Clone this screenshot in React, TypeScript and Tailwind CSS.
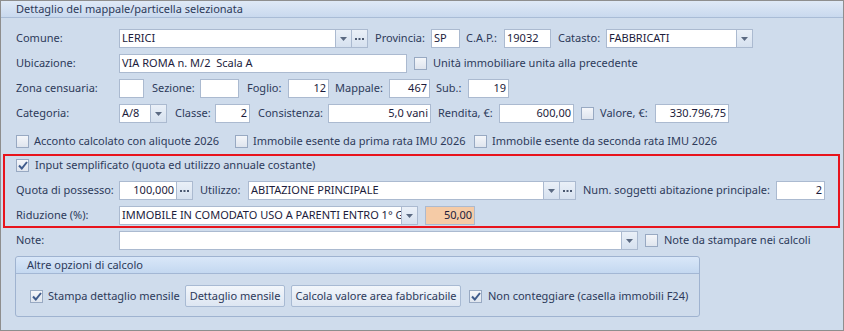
import React from "react";

const font = { fontFamily: '"Noto Sans", "Open Sans", sans-serif' };

const Arrow = () => (
  <svg width="7" height="4" viewBox="0 0 7 4">
    <path d="M0 0h7L3.5 4z" fill="#5b6a82" />
  </svg>
);

const Dots = () => (
  <svg width="9" height="2" viewBox="0 0 9 2">
    <rect x="0" y="0" width="2" height="2" fill="#4a5870" />
    <rect x="3.5" y="0" width="2" height="2" fill="#4a5870" />
    <rect x="7" y="0" width="2" height="2" fill="#4a5870" />
  </svg>
);

const Btn: React.FC<{ children: React.ReactNode; w?: string }> = ({ children, w = "w-[16px]" }) => (
  <div className={`${w} h-full shrink-0 flex items-center justify-center border-l border-[#abbad0] bg-gradient-to-b from-[#eaf0f8] to-[#d6e1ef]`}>
    {children}
  </div>
);

interface FieldProps {
  w: string;
  value?: string;
  right?: boolean;
  bg?: string;
  drop?: boolean;
  dots?: boolean;
}

const Field: React.FC<FieldProps> = ({ w, value = "", right, bg = "bg-white", drop, dots }) => (
  <div className={`${w} h-[19px] shrink-0 flex border border-[#abbad0] ${bg}`}>
    <div
      className={`flex-1 min-w-0 flex items-center px-[2px] text-[11px] text-[#1c1c3c] whitespace-pre overflow-hidden ${
        right ? "justify-end" : ""
      }`}
    >
      {value}
    </div>
    {drop && (
      <Btn>
        <Arrow />
      </Btn>
    )}
    {dots && (
      <Btn>
        <Dots />
      </Btn>
    )}
  </div>
);

const Label: React.FC<{ w?: string; children: React.ReactNode; className?: string }> = ({ w, children, className = "" }) => (
  <div className={`${w ?? ""} shrink-0 whitespace-nowrap text-[11px] text-[#2d3a5a] ${className}`}>{children}</div>
);

const Check: React.FC<{ on?: boolean }> = ({ on }) => (
  <div className="w-[13px] h-[13px] shrink-0 border border-[#98a9c2] bg-gradient-to-b from-[#f4f6fa] to-[#dfe5ee] flex items-center justify-center">
    {on && (
      <svg width="10" height="9" viewBox="0 0 10 9">
        <path d="M1 4.5 L3.8 7.5 L9 1" stroke="#3f5b8c" strokeWidth="2" fill="none" />
      </svg>
    )}
  </div>
);

const Button: React.FC<{ w: string; children: React.ReactNode }> = ({ w, children }) => (
  <div className={`${w} h-[22px] shrink-0 flex items-center justify-center rounded-[2px] border border-[#a8bad3] bg-gradient-to-b from-[#f2f6fb] to-[#dde6f2] text-[11px] text-[#2d3a5a] whitespace-nowrap`}>
    {children}
  </div>
);

export default function App() {
  return (
    <div style={font} className="w-[844px] h-[331px] border border-[#8e8e8e] bg-[#cfdcec] flex flex-col overflow-hidden">
      <div className="h-[17px] shrink-0 border-b border-[#a9bcd6] bg-gradient-to-b from-[#dfe9f6] to-[#c9d9ee] flex items-center pl-[15px] text-[11px] text-[#2d3a5a]">
        Dettaglio del mappale/particella selezionata
      </div>

      <div className="flex flex-col pt-[11px]">
        <div className="flex items-center h-[19px] pl-[15px]">
          <Label w="w-[103px]">Comune:</Label>
          <Field w="w-[249px]" value="LERICI" drop dots />
          <Label w="w-[56px]" className="ml-[7px]">Provincia:</Label>
          <Field w="w-[29px]" value="SP" />
          <Label w="w-[38px]" className="ml-[6px]">C.A.P.:</Label>
          <Field w="w-[47px]" value="19032" />
          <Label w="w-[48px]" className="ml-[7px]">Catasto:</Label>
          <Field w="w-[147px]" value="FABBRICATI" drop />
        </div>

        <div className="flex items-center h-[19px] pl-[15px] mt-[6px]">
          <Label w="w-[103px]">Ubicazione:</Label>
          <Field w="w-[288px]" value="VIA ROMA n. M/2  Scala A" />
          <div className="ml-[7px]">
            <Check />
          </div>
          <Label className="ml-[6px]">Unità immobiliare unita alla precedente</Label>
        </div>

        <div className="flex items-center h-[19px] pl-[15px] mt-[6px]">
          <Label w="w-[103px]">Zona censuaria:</Label>
          <Field w="w-[25px]" />
          <Label w="w-[48px]" className="ml-[8px]">Sezione:</Label>
          <Field w="w-[39px]" />
          <Label w="w-[41px]" className="ml-[8px]">Foglio:</Label>
          <Field w="w-[41px]" value="12" right />
          <Label w="w-[54px]" className="ml-[6px]">Mappale:</Label>
          <Field w="w-[41px]" value="467" right />
          <Label w="w-[32px]" className="ml-[6px]">Sub.:</Label>
          <Field w="w-[41px]" value="19" right />
        </div>

        <div className="flex items-center h-[19px] pl-[15px] mt-[6px]">
          <Label w="w-[103px]">Categoria:</Label>
          <Field w="w-[48px]" value="A/8" drop />
          <Label w="w-[40px]" className="ml-[8px]">Classe:</Label>
          <Field w="w-[35px]" value="2" right />
          <Label w="w-[70px]" className="ml-[8px]">Consistenza:</Label>
          <Field w="w-[103px]" value="5,0 vani" right />
          <Label w="w-[61px]" className="ml-[7px]">Rendita, €:</Label>
          <Field w="w-[75px]" value="600,00" right />
          <div className="ml-[7px]">
            <Check />
          </div>
          <Label w="w-[55px]" className="ml-[6px]">Valore, €:</Label>
          <Field w="w-[74px]" value="330.796,75" right />
        </div>

        <div className="flex items-center h-[19px] pl-[15px] mt-[9px]">
          <Check />
          <Label w="w-[201px]" className="ml-[5px]">Acconto calcolato con aliquote 2026</Label>
          <Check />
          <Label w="w-[221px]" className="ml-[5px]">Immobile esente da prima rata IMU 2026</Label>
          <Check />
          <Label className="ml-[5px]">Immobile esente da seconda rata IMU 2026</Label>
        </div>

        <div className="ml-[2px] mt-[3px] w-[837px] border-2 border-[#e8141c] pb-[1px] flex flex-col">
          <div className="flex items-center h-[19px] pl-[11px]">
            <Check on />
            <Label className="ml-[6px]">Input semplificato (quota ed utilizzo annuale costante)</Label>
          </div>
          <div className="flex items-center h-[19px] pl-[11px] mt-[6px]">
            <Label w="w-[103px]">Quota di possesso:</Label>
            <Field w="w-[74px]" value="100,000" right dots />
            <Label w="w-[48px]" className="ml-[7px]">Utilizzo:</Label>
            <Field w="w-[328px]" value="ABITAZIONE PRINCIPALE" drop dots />
            <Label w="w-[193px]" className="ml-[7px]">Num. soggetti abitazione principale:</Label>
            <Field w="w-[49px]" value="2" right />
          </div>
          <div className="flex items-center h-[19px] pl-[11px] mt-[6px]">
            <Label w="w-[103px]">Riduzione (%):</Label>
            <Field w="w-[299px]" value="IMMOBILE IN COMODATO USO A PARENTI ENTRO 1° GI" drop />
            <div className="ml-[7px]">
              <Field w="w-[50px]" value="50,00" right bg="bg-[#f5cba6]" />
            </div>
          </div>
        </div>

        <div className="flex items-center h-[19px] pl-[15px] mt-[3px]">
          <Label w="w-[103px]">Note:</Label>
          <Field w="w-[519px]" drop />
          <div className="ml-[7px]">
            <Check />
          </div>
          <Label className="ml-[6px]">Note da stampare nei calcoli</Label>
        </div>

        <div className="ml-[14px] mt-[6px] w-[685px] h-[61px] rounded-[3px] border border-[#9fb3d0] flex flex-col">
          <div className="h-[17px] shrink-0 border-b border-[#a3b7d4] bg-gradient-to-b from-[#d9e7f8] to-[#c4d8f0] rounded-t-[3px] flex items-center pl-[11px] text-[11px] text-[#2d3a5a]">
            Altre opzioni di calcolo
          </div>
          <div className="flex items-center h-[22px] mt-[11px] pl-[14px]">
            <Check on />
            <Label w="w-[137px]" className="ml-[5px]">Stampa dettaglio mensile</Label>
            <Button w="w-[100px]">Dettaglio mensile</Button>
            <div className="ml-[6px]">
              <Button w="w-[170px]">Calcola valore area fabbricabile</Button>
            </div>
            <div className="ml-[8px]">
              <Check on />
            </div>
            <Label className="ml-[6px]">Non conteggiare (casella immobili F24)</Label>
          </div>
        </div>
      </div>
    </div>
  );
}
